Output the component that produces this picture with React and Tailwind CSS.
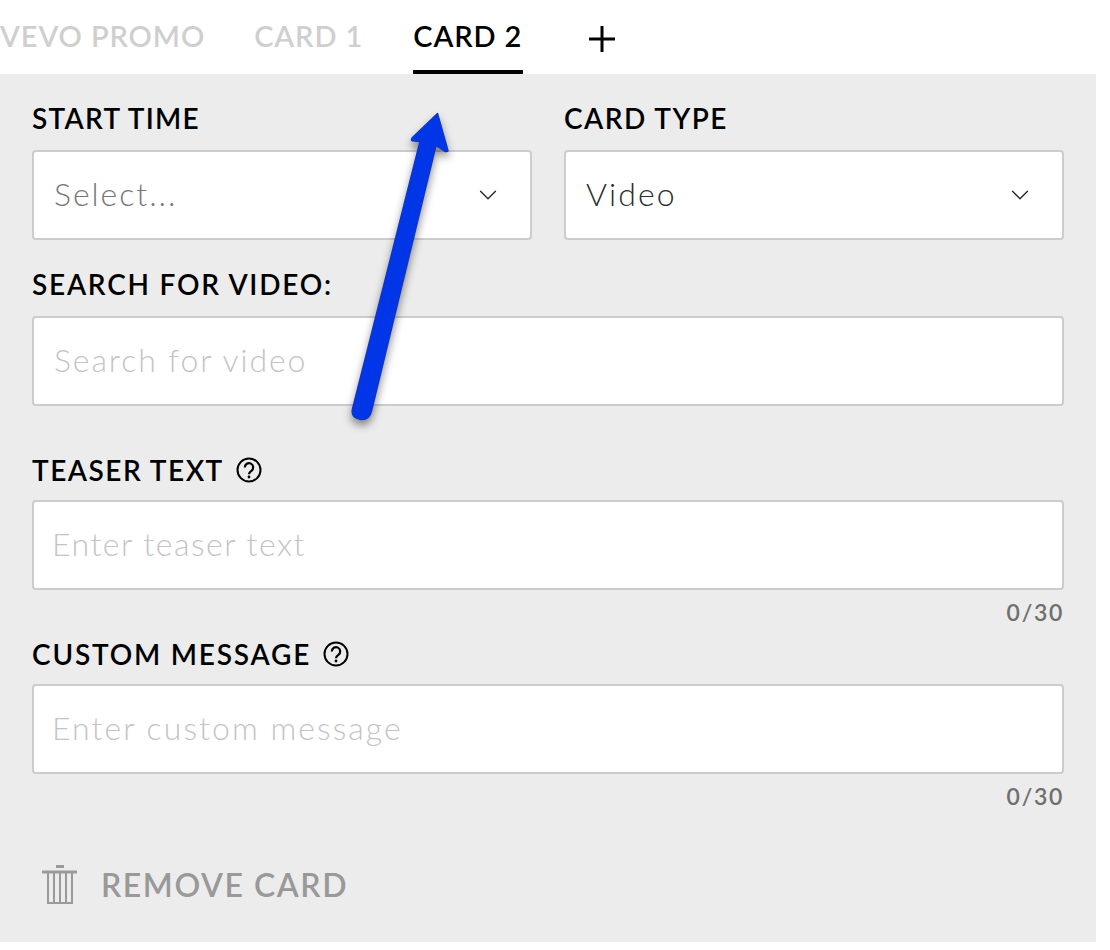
import { ChevronDown } from 'lucide-react'

const font = "font-['Lato','Noto_Sans',sans-serif]"

function HelpIcon() {
  return (
    <svg width="26" height="26" viewBox="0 0 26 26" fill="none" stroke="#000" strokeWidth="2">
      <circle cx="13" cy="13" r="11.5" />
      <path d="M8.8 10.4a4.2 4.2 0 1 1 6.6 3.4c-1.5 1-2.4 1.6-2.4 3.4" strokeWidth="2.2" />
      <circle cx="13" cy="20" r="1.4" fill="#000" stroke="none" />
    </svg>
  )
}

function Label({ children, help, className = '' }) {
  return (
    <div className={`flex items-center gap-[12px] h-[32px] text-[28px] leading-[32px] font-semibold text-black whitespace-nowrap ${className}`}>
      <span>{children}</span>
      {help && <HelpIcon />}
    </div>
  )
}

function SelectBox({ value, className }) {
  return (
    <div className="h-[90px] flex items-center justify-between pl-[20px] pr-[27px] bg-white border-2 border-[#cccccc] rounded-[4px]">
      <span className={`pb-[2px] text-[32px] font-light ${className}`}>{value}</span>
      <ChevronDown size={30} strokeWidth={1} className="text-[#222222]" />
    </div>
  )
}

function TextBox({ placeholder, className }) {
  return (
    <div className={`h-[90px] flex items-center bg-white border-2 border-[#cccccc] rounded-[4px] ${className}`}>
      <span className="pb-[2px] text-[32px] font-light text-[#c4c4c4]">{placeholder}</span>
    </div>
  )
}

function Counter() {
  return <div className="mt-[10px] h-[24px] text-right text-[23px] leading-[24px] font-semibold tracking-[1.7px] text-[#6f6f6f]">0/30</div>
}

export default function App() {
  return (
    <div className={`relative w-[1110px] h-[950px] bg-white overflow-hidden ${font}`}>
      {/* Tabs */}
      <div className="flex h-[74px] w-[1096px] text-[29px] font-semibold tracking-[0.9px] text-[#cfcfcf]">
        <div className="pt-[14px] whitespace-nowrap">VEVO PROMO</div>
        <div className="ml-[49px] pt-[14px] whitespace-nowrap">CARD 1</div>
        <div className="ml-[50px] w-[110px] pt-[14px] text-black border-b-[4px] border-black whitespace-nowrap">CARD 2</div>
        <svg className="ml-[65px] mt-[26px]" width="28" height="26" viewBox="0 0 28 26">
          <path d="M14 0v26M1 13h26" stroke="#000" strokeWidth="3" fill="none" />
        </svg>
      </div>

      {/* Form */}
      <div className="w-[1096px] h-[868px] bg-[#ececec] px-[32px] pt-[28px]">
        <div className="grid grid-cols-2 gap-x-[32px]">
          <div>
            <Label className="mb-[16px] tracking-[1.25px]">START TIME</Label>
            <SelectBox value="Select..." className="tracking-[1.95px] text-[#777777]" />
          </div>
          <div>
            <Label className="mb-[16px] tracking-[1.45px]">CARD TYPE</Label>
            <SelectBox value="Video" className="tracking-[2.1px] text-[#2c2c2c]" />
          </div>
        </div>

        <Label className="mt-[28px] mb-[16px] tracking-[1.75px]">SEARCH FOR VIDEO:</Label>
        <TextBox placeholder="Search for video" className="pl-[20px] tracking-[1.9px]" />

        <Label help className="mt-[48px] mb-[14px] tracking-[1.5px]">TEASER TEXT</Label>
        <TextBox placeholder="Enter teaser text" className="pl-[18px] tracking-[1.5px]" />
        <Counter />

        <Label help className="mt-[14px] mb-[14px] tracking-[1.8px]">CUSTOM MESSAGE</Label>
        <TextBox placeholder="Enter custom message" className="pl-[18px] tracking-[2.05px]" />
        <Counter />

        <div className="mt-[57px] flex items-center h-[40px] pl-[10px] text-[#999999]">
          <svg width="36" height="40" viewBox="0 0 36 40" fill="none" stroke="#9a9a9a">
            <path d="M0 7h35" strokeWidth="3" />
            <path d="M14 1.5h8" strokeWidth="3" />
            <path d="M6 8v30h24V8M12 8v30M18 8v30M24 8v30" strokeWidth="2" />
          </svg>
          <span className="ml-[23px] text-[32px] font-semibold tracking-[1.55px] whitespace-nowrap">REMOVE CARD</span>
        </div>
      </div>

      {/* Annotation arrow */}
      <svg className="absolute left-[340px] top-[100px]" width="130" height="340" viewBox="340 100 130 340">
        <defs>
          <filter id="arrowShadow" x="-40%" y="-10%" width="180%" height="120%">
            <feDropShadow dx="0" dy="5" stdDeviation="4" floodColor="#000" floodOpacity="0.45" />
          </filter>
        </defs>
        <g filter="url(#arrowShadow)" stroke="#0f35c4" strokeWidth="1.5" strokeLinejoin="round" fill="#0535e8">
          <path d="M437.5 113.5 L447.5 149 Q449 152 445 151.5 L436 145.5 L371.5 411 Q369.5 420 361 419.5 Q350.5 418 352.5 409 L420 141.5 L414 141 Q409.5 141 413 137 Z" />
        </g>
      </svg>
    </div>
  )
}
